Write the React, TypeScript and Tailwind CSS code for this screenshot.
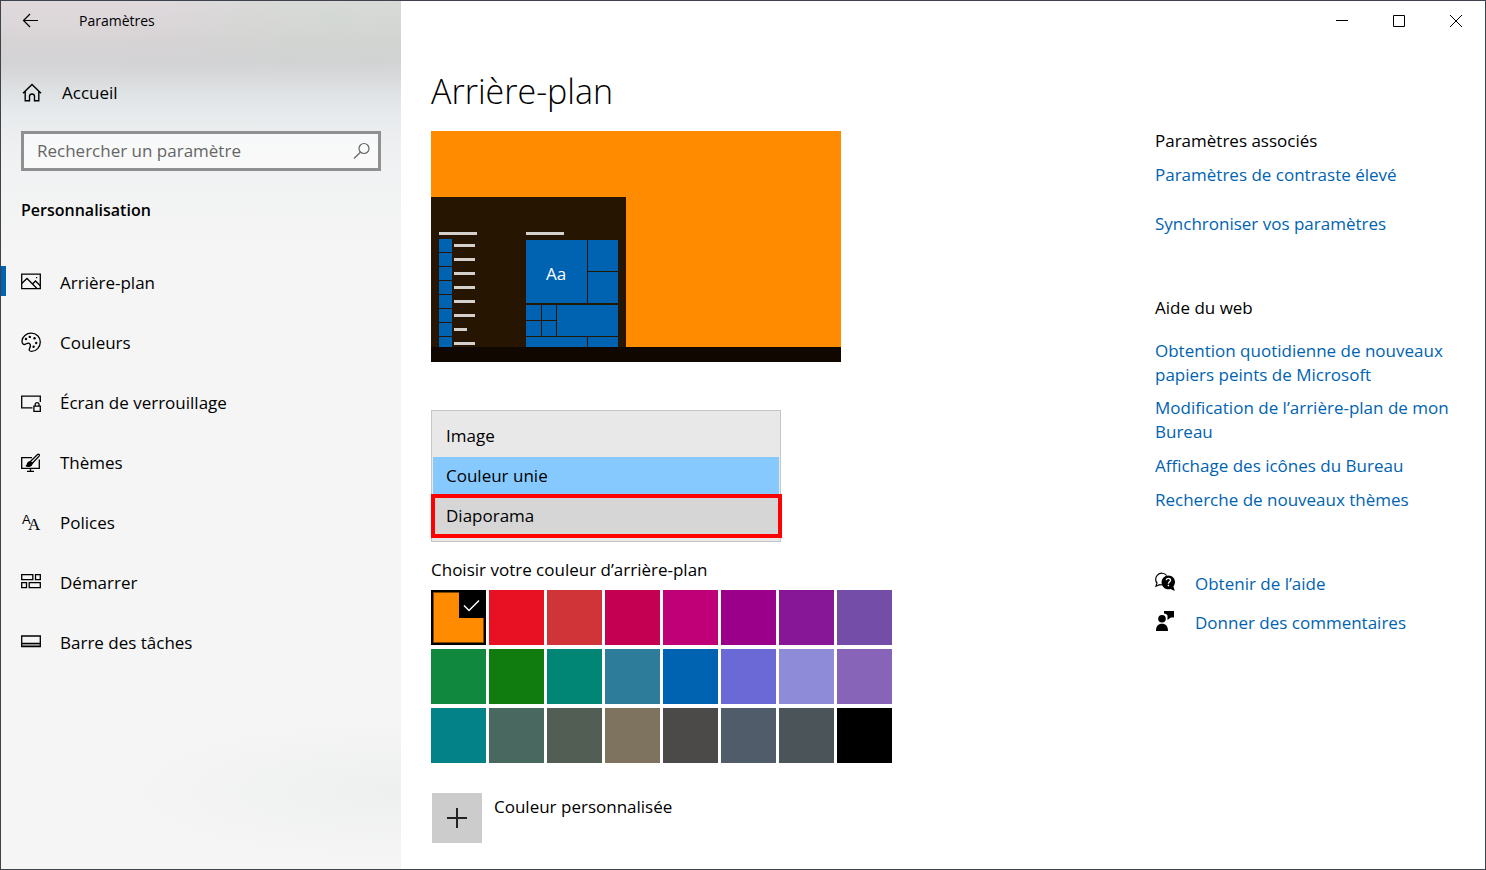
import React, { useState } from 'react'

interface NavItem {
  label: string
  icon: React.ReactNode
}

interface IconProps {
  children: React.ReactNode
}

function Icon({ children }: IconProps) {
  return (
    <svg
      viewBox="0 0 20 20"
      className="h-5 w-5 shrink-0 overflow-visible"
      fill="none"
      stroke="currentColor"
      strokeWidth="1.3"
      aria-hidden="true"
    >
      {children}
    </svg>
  )
}

const navItems: NavItem[] = [
  {
    label: 'Arrière-plan',
    icon: (
      <Icon>
        <path d="M.7 1.200h18.600v14.500H.7z" />
        <path d="M.7 10.500 6 5.500l10 10M11.500 11l3-3 4.800 4.800" />
        <path d="M15 4h1.200v1.200H15z" fill="currentColor" stroke="none" />
      </Icon>
    ),
  },
  {
    label: 'Couleurs',
    icon: (
      <Icon>
        <path d="M1 7.800C1.300 3.500 5.300.2 10.200.2c5.200 0 9.100 3.800 9.100 8.700 0 5.300-4 9.400-8.800 9.400-2.200 0-2.900-1.200-1.900-2.900.9-1.600 1.200-3.400.2-4.600-1.100-1.300-2.700-.6-4 .2C2.700 12.300.8 10.800 1 7.800z" />
        <g fill="currentColor" stroke="none">
          <circle cx="5" cy="6" r="1.200" />
          <circle cx="8.800" cy="3.900" r="1.200" />
          <circle cx="13.500" cy="5.200" r="1.200" />
          <circle cx="15.200" cy="10" r="1.200" />
          <circle cx="12.600" cy="13.800" r="1.200" />
        </g>
      </Icon>
    ),
  },
  {
    label: 'Écran de verrouillage',
    icon: (
      <Icon>
        <path d="M11.500 14.800H.7V3.200h18.600V9" />
        <path d="M12.900 13.200h6.400v5.200h-6.400zM14.200 13v-1.500a1.900 1.900 0 0 1 3.800 0V13" />
      </Icon>
    ),
  },
  {
    label: 'Thèmes',
    icon: (
      <Icon>
        <path d="M11 4.700H.7v10.600h17.600V6.500M9.500 15.300v2.500M6 18.300h7" />
        <path d="M9.200 8.800 16.500 1.600c1.200-.9 2.500.3 1.600 1.500l-7 7.400z" />
        <path d="M9 9c-1.700 0-2.400 1.200-2.600 2.400-.2.900-.7 1.300-1.500 1.300 2.500 1.100 5.700.7 6.200-2.200z" fill="currentColor" />
      </Icon>
    ),
  },
  {
    label: 'Polices',
    icon: (
      <Icon>
        <g fill="currentColor" stroke="none">
          <text x="1" y="11" fontSize="13" fontFamily="Liberation Sans, sans-serif">A</text>
          <text x="7" y="17" fontSize="17" fontFamily="Liberation Serif, serif">A</text>
        </g>
      </Icon>
    ),
  },
  {
    label: 'Démarrer',
    icon: (
      <Icon>
        <path d="M.7 1.700h11.100v5H.7zM14.500 1.700h4.800v5h-4.800zM.7 9.700h4.800v5H.7zM8.200 9.700h11.100v5H8.200z" />
      </Icon>
    ),
  },
  {
    label: 'Barre des tâches',
    icon: (
      <Icon>
        <path d="M1 10.500h18v3H1z" fill="#999" stroke="none" />
        <path d="M.7 3h18.600v10.500H.7zM.7 10.300h18.600" />
      </Icon>
    ),
  },
]

const swatches = [
  '#ff8c00', '#e81123', '#d13438', '#c30052', '#bf0077', '#9a0089', '#881798', '#744da9',
  '#10893e', '#107c10', '#018574', '#2d7d9a', '#0063b1', '#6b69d6', '#8e8cd8', '#8764b8',
  '#038387', '#486860', '#525e54', '#7e735f', '#4c4a48', '#515c6b', '#4a5459', '#000000',
]

function TitleBarControls() {
  return (
    <div className="flex h-10 justify-end pr-px">
      <button aria-label="Réduire" className="flex w-[57px] items-center justify-center">
        <svg width="12" height="12" viewBox="0 0 12 12" stroke="currentColor" aria-hidden="true">
          <path d="M0 5.500h12" />
        </svg>
      </button>
      <button aria-label="Agrandir" className="flex w-[57px] items-center justify-center">
        <svg width="12" height="12" viewBox="0 0 12 12" fill="none" stroke="currentColor" aria-hidden="true">
          <path d="M.5.5h11v11H.5z" />
        </svg>
      </button>
      <button aria-label="Fermer" className="flex w-[57px] items-center justify-center">
        <svg width="12" height="12" viewBox="0 0 12 12" stroke="currentColor" aria-hidden="true">
          <path d="m0 0 12 12M12 0 0 12" />
        </svg>
      </button>
    </div>
  )
}

function Sidebar() {
  const [active, setActive] = useState('Arrière-plan')

  return (
    <aside className="w-[400px] shrink-0 bg-[#f5f5f5] bg-[radial-gradient(ellipse_160px_70px_at_330px_15px,#d0dacf80,transparent),radial-gradient(ellipse_300px_80px_at_60px_0px,#e2d8dc99,transparent),radial-gradient(ellipse_280px_70px_at_400px_790px,#e9ebeb99,transparent),linear-gradient(180deg,#dcdadc_0px,#d3d2d3_40px,#d1d2d4_60px,#d8dadc_76px,#e1e4e6_95px,#e8ebed_115px,#f0f1f2_160px,#f5f5f5_250px)]">
      <div className="flex h-10 items-center pl-5">
        <button aria-label="Retour" className="w-[58px]">
          <svg width="20" height="20" viewBox="0 0 20 20" fill="none" stroke="currentColor" strokeWidth="1.200" aria-hidden="true">
            <path d="M17 9.500H2.500M9 3 2.500 9.500 9 16" />
          </svg>
        </button>
        <span className="text-sm">Paramètres</span>
      </div>

      <a href="#accueil" className="mt-8 flex h-10 items-center gap-5 pl-[21px]">
        <svg viewBox="0 0 20 20" className="h-5 w-5" fill="none" stroke="currentColor" strokeWidth="1.400" aria-hidden="true">
          <path d="M1 10.200 10 1.500l9 8.700M3.200 8.500v9.300h4.300v-4.600c0-3 5-3 5 0v4.600h4.300V8.500" />
        </svg>
        Accueil
      </a>

      <div className="mx-5 mt-[18px] flex h-10 items-center border-[3px] border-[#8f9091] bg-white/60 pr-[7px] pl-[13px]">
        <input
          type="search"
          aria-label="Rechercher un paramètre"
          placeholder="Rechercher un paramètre"
          className="min-w-0 flex-1 bg-transparent outline-none placeholder:text-[#666]"
        />
        <svg width="18" height="18" viewBox="0 0 18 18" fill="none" stroke="#666" strokeWidth="1.200" aria-hidden="true">
          <circle cx="11" cy="6.500" r="5" />
          <path d="M7.400 10.200 1 16.500" />
        </svg>
      </div>

      <h2 className="mt-[19px] pl-5 text-base leading-10 font-semibold">Personnalisation</h2>

      <nav className="mt-[23px]">
        {navItems.map((item) => (
          <a
            key={item.label}
            href="#"
            aria-current={item.label === active ? 'page' : undefined}
            onClick={() => setActive(item.label)}
            className="flex h-[60px] items-center"
          >
            <span className={item.label === active ? 'mr-[15px] mb-1 h-[30px] w-[5px] bg-[#0063b1]' : 'mr-[15px] w-[5px]'} />
            {item.icon}
            <span className="pl-[19px]">{item.label}</span>
          </a>
        ))}
      </nav>
    </aside>
  )
}

function DesktopPreview({ color }: { color: string }) {
  const rows = [21, 21, 21, 21, 21, 21, 13, 21]

  return (
    <svg
      width="410"
      height="231"
      viewBox="0 0 410 231"
      shapeRendering="crispEdges"
      role="img"
      aria-label="Aperçu du bureau"
      className="mt-4 block"
    >
      <rect width="410" height="231" fill={color} />
      <rect y="66" width="195" height="150" fill="#261500" />
      <g fill="#d4d0cc">
        <rect x="8" y="101" width="38" height="3" />
        <rect x="95" y="101" width="38" height="3" />
        {rows.map((width, i) => (
          <rect key={i} x="23" y={113 + i * 14} width={width} height="3" />
        ))}
      </g>
      <g fill="#0063b1">
        {rows.map((_, i) => (
          <rect key={i} x="8" y={108 + i * 14} width="13" height="13" />
        ))}
        <rect x="95" y="109" width="61" height="63" />
        <rect x="157" y="109" width="30" height="31" />
        <rect x="157" y="141" width="30" height="31" />
        <rect x="95" y="174" width="15" height="15" />
        <rect x="111" y="174" width="14" height="15" />
        <rect x="95" y="190" width="15" height="15" />
        <rect x="111" y="190" width="14" height="15" />
        <rect x="126" y="174" width="61" height="31" />
        <rect x="95" y="206" width="61" height="10" />
        <rect x="157" y="206" width="30" height="10" />
      </g>
      <rect y="216" width="410" height="15" fill="#0f0700" />
      <text x="125" y="149" fontSize="17" textAnchor="middle" fill="#fff">
        Aa
      </text>
    </svg>
  )
}

function BackgroundTypeList() {
  const [type, setType] = useState('Couleur unie')

  return (
    <div className="relative mt-12 w-[350px]">
      <select
        size={3}
        aria-label="Arrière-plan"
        value={type}
        onChange={(event) => setType(event.target.value)}
        className="block h-[132px] w-full overflow-hidden border border-[#c6c6c6] bg-[#e8e8e8] px-px py-[6px] outline-none"
      >
        {['Image', 'Couleur unie', 'Diaporama'].map((option) => (
          <option
            key={option}
            className="h-10 px-[13px] pt-[7px] pb-0 text-black last:bg-[#d6d6d6] checked:bg-[linear-gradient(#86c9ff,#86c9ff)] checked:text-black"
          >
            {option}
          </option>
        ))}
      </select>
      <div className="pointer-events-none absolute -right-px bottom-1 left-0 h-11 border-4 border-[#ff0000]" />
    </div>
  )
}

function ColorPicker({ color, onChange }: { color: string; onChange: (color: string) => void }) {
  return (
    <fieldset className="mt-4">
      <legend className="leading-6">Choisir votre couleur d’arrière-plan</legend>
      <div className="mt-2 grid w-fit grid-cols-8 gap-x-[3px] gap-y-1">
        {swatches.map((swatch) => (
          <label key={swatch} className="relative block h-[55px] w-[55px]">
            <input
              type="radio"
              name="background-color"
              aria-label={swatch}
              checked={swatch === color}
              onChange={() => onChange(swatch)}
              className="block h-full w-full appearance-none border-black checked:border-2 checked:inset-ring checked:inset-ring-black/50"
              style={{ backgroundColor: swatch }}
            />
            {swatch === color ? (
              <span className="absolute top-0 right-0 flex h-7 w-[27px] items-end justify-start bg-black pb-1 pl-1">
                <svg width="18" height="18" viewBox="0 0 18 18" fill="none" stroke="#fff" strokeWidth="1.500" aria-hidden="true">
                  <path d="m1 9.500 5 5L16 4.500" />
                </svg>
              </span>
            ) : null}
          </label>
        ))}
      </div>
    </fieldset>
  )
}

function RelatedLinks() {
  const link = 'block text-[#0063b1]'

  return (
    <aside className="w-[300px] shrink-0 pt-[88px] leading-6">
      <h2>Paramètres associés</h2>
      <a href="#contraste" className={`${link} mt-[10px]`}>Paramètres de contraste élevé</a>
      <a href="#synchroniser" className={`${link} mt-[25px]`}>Synchroniser vos paramètres</a>

      <h2 className="mt-[60px]">Aide du web</h2>
      <a href="#papiers-peints" className={`${link} mt-[19px]`}>
        Obtention quotidienne de nouveaux papiers peints de Microsoft
      </a>
      <a href="#modification" className={`${link} mt-[9px]`}>Modification de l’arrière-plan de mon Bureau</a>
      <a href="#icones" className={`${link} mt-[10px]`}>Affichage des icônes du Bureau</a>
      <a href="#themes" className={`${link} mt-[10px]`}>Recherche de nouveaux thèmes</a>

      <div className="mt-[60px] flex items-start gap-5">
        <svg viewBox="0 0 20 20" className="h-5 w-5 shrink-0" aria-hidden="true">
          <path d="M7.500 12.500c-1 .4-2 .5-3 .2L1 14.200l1-3.200C.2 9 .2 5.500 2.200 3.300c2.600-2.900 7.300-2.700 9.500.2" fill="none" stroke="#000" strokeWidth="1.200" />
          <path d="M13.300 3.500c3.800 0 6.700 2.900 6.700 6.500 0 1.700-.6 3.200-1.600 4.300l1.400 4.700-4.300-2.100c-4.800 1.300-8.900-2-8.900-6.500 0-3.900 3-6.900 6.700-6.900z" />
          <path d="M11.300 8.200c.1-2.500 4.300-2.400 4.200 0 0 1.600-2.100 1.600-2.100 3.600M13.400 12.800v1.500" fill="none" stroke="#fff" strokeWidth="1.400" />
        </svg>
        <a href="#aide" className="text-[#0063b1]">Obtenir de l’aide</a>
      </div>
      <div className="mt-[15px] flex items-start gap-5">
        <svg viewBox="0 0 20 20" className="h-5 w-5 shrink-0" aria-hidden="true">
          <circle cx="7" cy="7.800" r="3.800" />
          <path d="M1 20c0-5 2.300-7.200 6-7.200s6 2.200 6 7.200zM9 0h10v6.500h-3.200L12.500 9V4.500C11.800 3.400 10.600 2.600 9 2.500z" />
        </svg>
        <a href="#commentaires" className="text-[#0063b1]">Donner des commentaires</a>
      </div>
    </aside>
  )
}

export default function App() {
  const [color, setColor] = useState('#ff8c00')

  return (
    <div className="flex min-h-screen border border-[#3d424c] bg-white font-['Open_Sans',sans-serif] text-[17px] text-black">
      <Sidebar />
      <div className="flex min-w-0 flex-1 flex-col">
        <TitleBarControls />
        <div className="flex flex-1 justify-between px-[30px]">
          <main>
            <h1 className="mt-[26px] text-[34px] leading-[48px] font-light">Arrière-plan</h1>
            <DesktopPreview color={color} />
            <BackgroundTypeList />
            <ColorPicker color={color} onChange={setColor} />
            <div className="mt-[30px] flex gap-3 pl-px">
              <button
                id="custom-color"
                aria-labelledby="custom-color-label"
                className="flex h-[50px] w-[50px] items-center justify-center bg-[#ccc]"
              >
                <svg width="20" height="20" viewBox="0 0 20 20" stroke="#222" strokeWidth="2" aria-hidden="true">
                  <path d="M0 10h20M10 0v20" />
                </svg>
              </button>
              <label id="custom-color-label" htmlFor="custom-color" className="pt-[2px] leading-6">
                Couleur personnalisée
              </label>
            </div>
          </main>
          <RelatedLinks />
        </div>
      </div>
    </div>
  )
}
